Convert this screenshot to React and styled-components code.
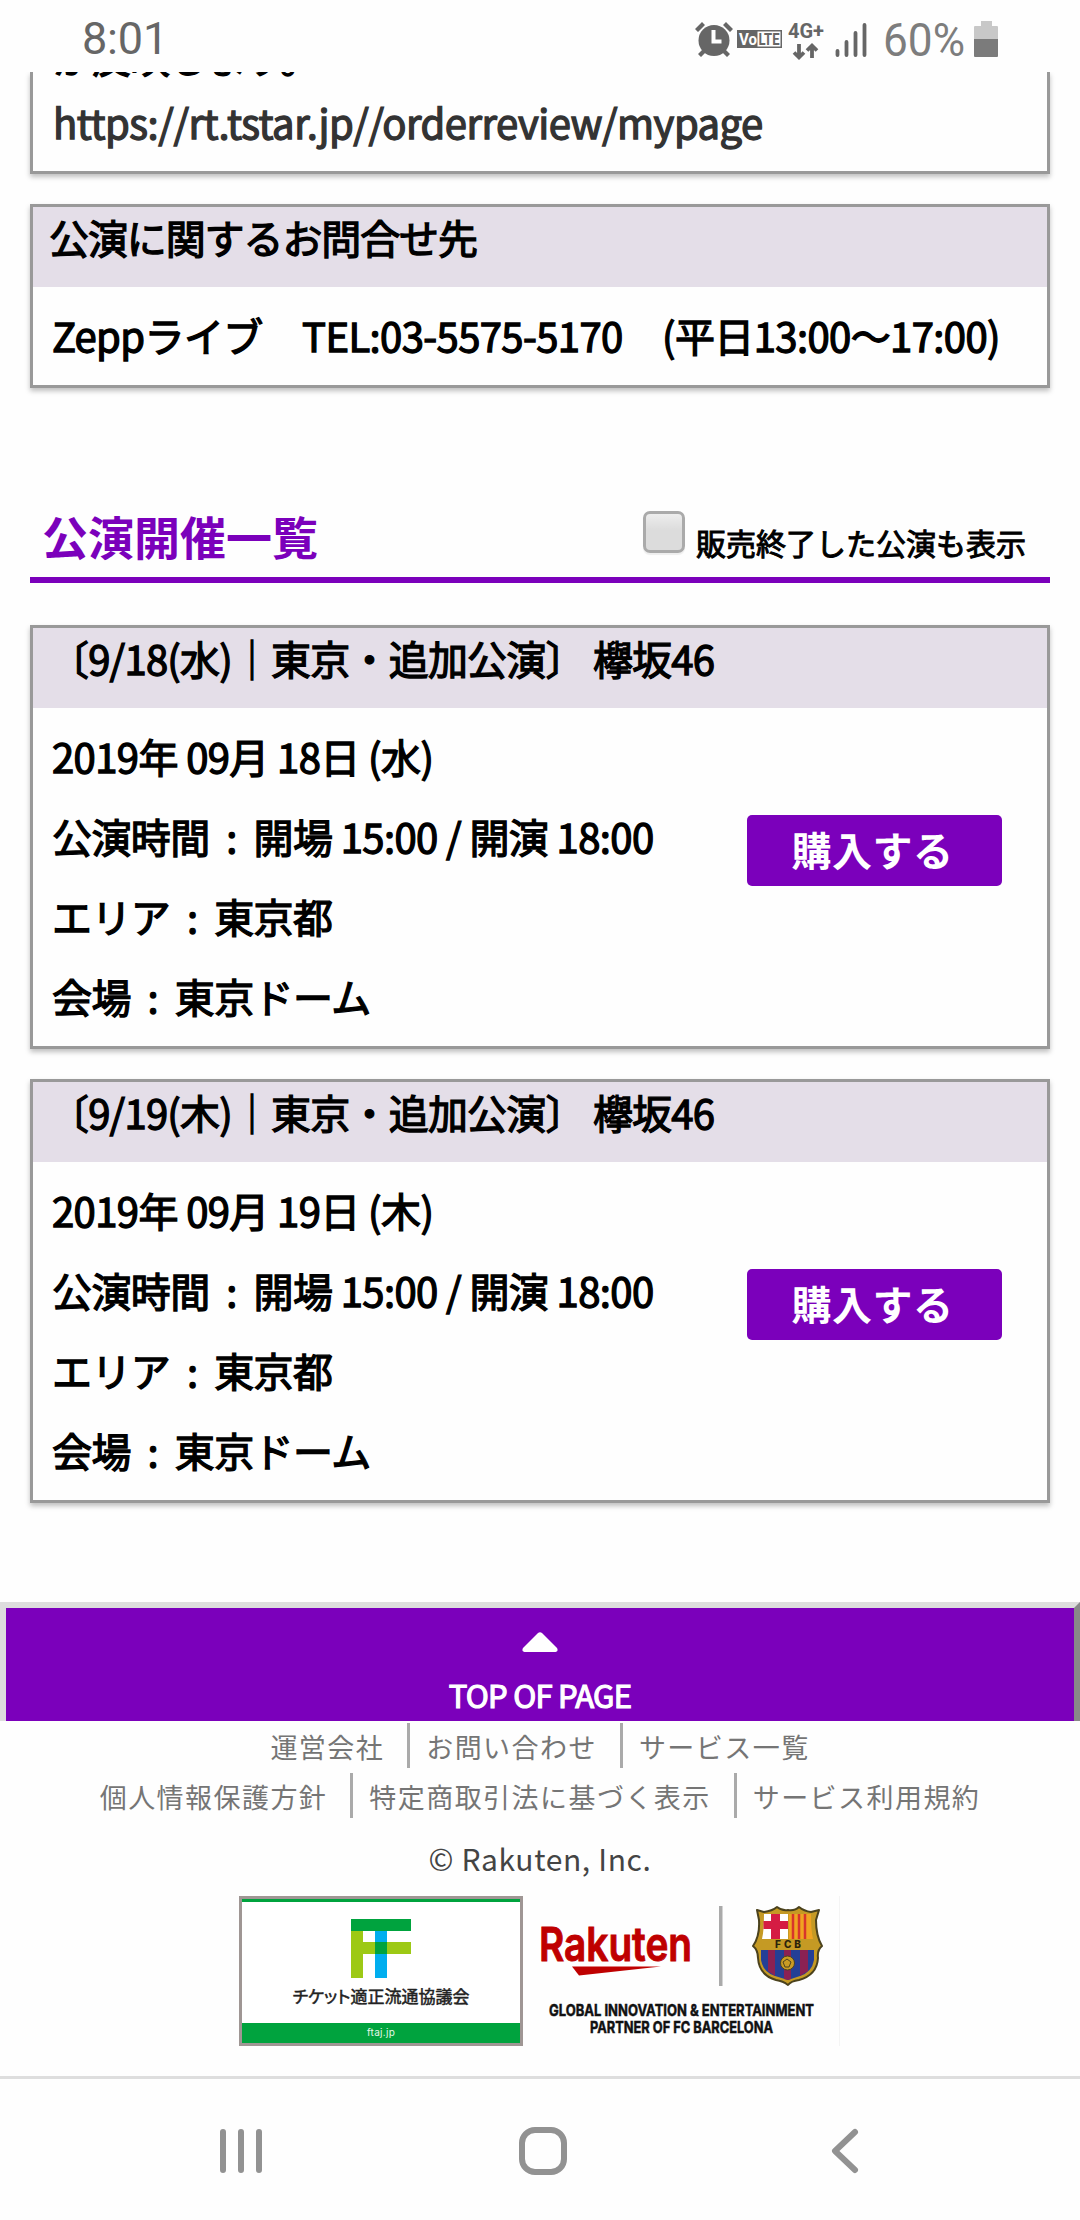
import React from "react";
import styled, { createGlobalStyle } from "styled-components";

const PURPLE = "#7b00bb";

const GlobalStyle = createGlobalStyle`
  body {
    margin: 0;
    background: #fefefe;
    color: #000;
    font-family: "Noto Sans CJK JP", sans-serif;
  }

  * {
    box-sizing: border-box;
  }
`;

const Screen = styled.div`
  display: flex;
  flex-direction: column;
  width: 1080px;
  height: 2220px;
  overflow: hidden;
`;

const StatusBar = styled.header`
  display: flex;
  justify-content: space-between;
  align-items: center;
  flex: none;
  height: 72px;
  padding: 4px 80px 0 82px;
  color: #666;
  font-family: Roboto, sans-serif;
  font-size: 45px;
`;

const Clock = styled.span`
  letter-spacing: -0.2px;
`;

const StatusIcons = styled.svg`
  display: block;
`;

/* the page is scrolled, so the first card is cut by the status bar */
const Page = styled.main`
  display: flex;
  flex-direction: column;
  flex: none;
  height: 1530px;
  padding: 0 30px;
  overflow: hidden;
`;

const Card = styled.section`
  flex: none;
  margin-bottom: 30px;
  border: 3px solid #999;
  background: #fefefe;
  box-shadow: 0 3px 5px rgba(0, 0, 0, 0.25);
`;

const CutCard = styled(Card)`
  display: flex;
  flex-direction: column;
  justify-content: flex-end;
  height: 102px;
  border-top: 0;
  overflow: hidden;
  padding: 0 18px 9px 20px;
`;

const CardHeader = styled.h3`
  height: 80px;
  margin: 0;
  padding-left: 16px;
  background: #e4dee8;
  font-size: 40px;
  font-weight: 400;
  line-height: 61px;
  letter-spacing: ${props => props.$spacing || "-1.1px"};
  white-space: pre;
  -webkit-text-stroke: 1.3px #000;
`;

const CardBody = styled.div`
  display: flex;
  justify-content: space-between;
  padding: 8px 45px 10px 19px;
`;

const Line = styled.p`
  flex: none;
  margin: 0;
  font-size: 40px;
  line-height: 80px;
  letter-spacing: -0.6px;
  white-space: pre;
  -webkit-text-stroke: 1.3px currentColor;
`;

const CutLine = styled(Line)`
  margin-bottom: -14px;
  letter-spacing: -1.5px;
`;

const ReviewLink = styled(Line)`
  color: #333;
  letter-spacing: -0.5px;
`;

const BuyButton = styled.button`
  width: 255px;
  height: 71px;
  margin-top: 99px;
  padding: 0 4px 4px 0;
  border: 0;
  border-radius: 5px;
  background: ${PURPLE};
  color: #fff;
  font: bold 40px/1 "Noto Sans CJK JP", sans-serif;
  letter-spacing: 0.5px;
`;

const ListHeading = styled.div`
  display: flex;
  align-items: flex-end;
  justify-content: space-between;
  flex: none;
  height: 105px;
  margin: 60px 0 42px;
  padding: 0 24px 0 12px;
  border-bottom: 6px solid ${PURPLE};
`;

const ListTitle = styled.h2`
  margin: 0;
  padding-bottom: 15px;
  color: ${PURPLE};
  font-size: 46px;
  line-height: 54px;
`;

const SoldOutToggle = styled.label`
  display: flex;
  align-items: flex-start;
  gap: 11px;
  height: 66px;
  font-size: 30px;
  line-height: 62px;
  -webkit-text-stroke: 1px #000;
`;

const Checkbox = styled.input`
  appearance: none;
  width: 42px;
  height: 42px;
  margin: 0;
  border: 3px solid #aaa;
  border-radius: 7px;
  background: linear-gradient(#ededed, #dcdcdc 45%);
  box-shadow: 0 2px 1px #eee;
`;

const TopButton = styled.a`
  display: flex;
  flex-direction: column;
  align-items: center;
  flex: none;
  height: 119px;
  border: 6px solid #ddd;
  border-right-color: #888;
  border-bottom: 0;
  background: ${PURPLE};
  color: #fff;
  font-size: 31px;
  line-height: 44px;
  letter-spacing: -0.7px;
  -webkit-text-stroke: 1.2px #fff;

  svg {
    margin: 24px 0 20px;
  }
`;

const LinkRow = styled.nav`
  display: flex;
  justify-content: center;
  flex: none;
  width: 1080px;
  height: 50px;
  padding: 2px 0 0 7px;
`;

const FooterLink = styled.a`
  height: 45px;
  padding: 0 23px 0 16px;
  border-right: 3px solid #aaa;
  color: #757575;
  font-size: 27px;
  line-height: 48px;
  letter-spacing: 1.45px;

  &:last-child {
    border-right: 0;
  }
`;

const Copyright = styled.p`
  flex: none;
  margin: 15px 0 2px;
  color: #444;
  font-size: 30px;
  line-height: 44px;
  letter-spacing: 0.65px;
  text-align: center;
`;

const Badges = styled.div`
  display: flex;
  gap: 5px;
  flex: none;
  height: 150px;
  margin: 14px 0 30px 239px;
`;

const TicketBadge = styled.div`
  display: flex;
  flex-direction: column;
  align-items: center;
  width: 284px;
  border: 3px solid #9f9694;
  background: #fff;

  &::before {
    content: "";
    width: 100%;
    height: 3px;
    background: #00a33e;
  }

  svg {
    margin-top: 17px;
  }
`;

const TicketName = styled.span`
  margin-top: 6px;
  color: #222;
  font-size: 17px;
  font-weight: 400;
  line-height: 24px;
  font-feature-settings: "palt";
  -webkit-text-stroke: 0.5px #222;
  white-space: nowrap;
`;

const TicketSite = styled.span`
  width: 100%;
  height: 20px;
  margin-top: auto;
  background: #00a33e;
  color: #e4f8e9;
  font: 10px/18px Inter, sans-serif;
  letter-spacing: 0.3px;
  text-align: center;
`;

const PartnerBadge = styled.div`
  display: flex;
  flex-direction: column;
  width: 312px;
  border-right: 1px solid #f4f4f4;
`;

const PartnerLogos = styled.svg`
  display: block;
  overflow: visible;
`;

const SystemNav = styled.footer`
  flex: 1;
  border-top: 3px solid #dedede;

  svg {
    display: block;
  }
`;

const shows = [
  { title: "〔9/18(水)｜東京・追加公演〕 欅坂46", date: "2019年 09月 18日 (水)" },
  { title: "〔9/19(木)｜東京・追加公演〕 欅坂46", date: "2019年 09月 19日 (木)" }
];

const links = [
  ["運営会社", "お問い合わせ", "サービス一覧"],
  ["個人情報保護方針", "特定商取引法に基づく表示", "サービス利用規約"]
];

const Indicators = () => (
  <StatusIcons width="306" height="60" viewBox="694 6 306 60">
    <g fill="#666">
      <circle cx="714" cy="38.500" r="15.500" />
      <path d="M703 47l-5 5 3 3 6-6zM725 47l5 5-3 3-6-6z" />
      <path d="M695 27l7-7 3 3-7 7zM733 27l-7-7-3 3 7 7z" />
    </g>
    <path d="M713.500 28v11.500h8" fill="none" stroke="#fff" strokeWidth="4" />
    <rect x="737" y="28" width="45" height="18" fill="#666" />
    <rect x="757.500" y="29.500" width="23" height="15" fill="#fff" />
    <text x="739" y="43" fill="#fff" fontSize="17" fontWeight="700" textLength="18" lengthAdjust="spacingAndGlyphs">Vo</text>
    <text x="758.500" y="43" fill="#666" fontSize="17" fontWeight="700" textLength="21" lengthAdjust="spacingAndGlyphs">LTE</text>
    <text x="788" y="36" fill="#666" fontSize="20" fontWeight="700" textLength="36" lengthAdjust="spacingAndGlyphs">4G+</text>
    <path d="M799 42v13M794 50.500l5 4.800 5-4.800M812 56V43M807 48.500l5-4.800 5 4.800" fill="none" stroke="#666" strokeWidth="3.800" />
    <path d="M837.500 49v4M846.500 40v13M855.500 31v22M864.500 23v30" stroke="#666" strokeWidth="3.800" strokeLinecap="round" />
    <text x="883" y="54" fill="#7d7d7d" fontSize="46" textLength="82" lengthAdjust="spacingAndGlyphs">60%</text>
    <path d="M981 19h11v5h5q1 0 1 1v13h-24V25q0-1 1-1h6z" fill="#c8c8c8" />
    <path d="M974 37h24v17q0 1-1 1h-22q-1 0-1-1z" fill="#7b7b7b" />
  </StatusIcons>
);

const FfLogo = () => (
  <svg width="60" height="59">
    <path d="M0 12h12v11h48v12H12v24H0z" fill="#9dc915" />
    <rect x="24" y="12" width="12" height="47" fill="#00aeef" />
    <path d="M0 0h60v12H0zM24 23h12v12H24z" fill="#00a33e" />
  </svg>
);

const Partner = () => (
  <PartnerLogos width="311" height="150" viewBox="528 1896 311 150">
    <text x="539" y="1961" fill="#bf0000" fontFamily="Inter" fontWeight="600" fontSize="47" stroke="#bf0000" strokeWidth="1" textLength="153" lengthAdjust="spacingAndGlyphs">Rakuten</text>
    <path d="M572 1966.500h89l-82 9z" fill="#bf0000" />
    <rect x="719" y="1906" width="3.500" height="80" fill="#aaa" />
    <path
      d="M757 1910l7 2q8-1 13-5 5 4 11 3 7 1 11-3 5 4 12 5l8-2-3 10q0 16 6 26-5 4-4 12-1 17-19 22-8 1-11 5-5-4-12-5-17-5-18-22 0-8-5-12 7-10 6-26z"
      fill="#c59a24"
      stroke="#4b421d"
      strokeWidth="2"
      strokeLinejoin="round"
    />
    <path d="M764 1914h24v25h-26q2-8 2-25z" fill="#fff" />
    <path d="M763.500 1921H788v8h-24.500zM771 1914h9v25h-9z" fill="#d51c43" />
    <path d="M789 1914h22q0 17 2 25h-24z" fill="#f0a321" />
    <path d="M793 1914v25M799 1914v25M805 1914v25" stroke="#d7352c" strokeWidth="2.500" />
    <path d="M761 1950h53v10q-2 12-14 16l-12 4-13-4q-12-4-14-16z" fill="#243f96" />
    <path d="M768 1950h7v26l-7-5zM784 1950h7v29l-3 1-4-1zM800 1950h8v21l-8 5z" fill="#8b2153" />
    <circle cx="787.500" cy="1963" r="7" fill="#c99c24" stroke="#4b421d" />
    <path d="M783 1962l4-3 4 3-2 5h-4z" fill="none" stroke="#4b421d" />
    <text x="775" y="1948" fontFamily="Inter" fontWeight="800" fontSize="10" textLength="26" fill="#2b230b">FCB</text>
    <g fill="#111" stroke="#111" strokeWidth="0.500" fontFamily="Inter" fontWeight="700" fontSize="16">
      <text x="549" y="2015.500" textLength="265" lengthAdjust="spacingAndGlyphs">GLOBAL INNOVATION &amp; ENTERTAINMENT</text>
      <text x="590" y="2032.500" textLength="183" lengthAdjust="spacingAndGlyphs">PARTNER OF FC BARCELONA</text>
    </g>
  </PartnerLogos>
);

const App = () => (
  <Screen>
    <GlobalStyle />
    <StatusBar>
      <Clock>8:01</Clock>
      <Indicators />
    </StatusBar>
    <Page>
      <CutCard>
        <CutLine>が反映します。</CutLine>
        <ReviewLink>https://rt.tstar.jp//orderreview/mypage</ReviewLink>
      </CutCard>
      <Card>
        <CardHeader>公演に関するお問合せ先</CardHeader>
        <CardBody>
          <Line>Zeppライブ　TEL:03-5575-5170　(平日13:00〜17:00)</Line>
        </CardBody>
      </Card>
      <ListHeading>
        <ListTitle>公演開催一覧</ListTitle>
        <SoldOutToggle>
          <Checkbox type="checkbox" />
          販売終了した公演も表示
        </SoldOutToggle>
      </ListHeading>
      {shows.map((show, index) => (
        <Card key={index}>
          <CardHeader $spacing="-0.8px">{show.title}</CardHeader>
          <CardBody>
            <div>
              <Line>{show.date}</Line>
              <Line>{"公演時間  :  開場 15:00 / 開演 18:00"}</Line>
              <Line>{"エリア  :  東京都"}</Line>
              <Line>{"会場  :  東京ドーム"}</Line>
            </div>
            <BuyButton>購入する</BuyButton>
          </CardBody>
        </Card>
      ))}
    </Page>
    <TopButton>
      <svg width="36" height="21">
        <path d="M16 1q2-1.500 4 0l15 15q2 4-3 4H4q-5 0-3-4z" fill="#fff" />
      </svg>
      TOP OF PAGE
    </TopButton>
    {links.map((row, index) => (
      <LinkRow key={index}>
        {row.map(text => (
          <FooterLink key={text}>{text}</FooterLink>
        ))}
      </LinkRow>
    ))}
    <Copyright>© Rakuten, Inc.</Copyright>
    <Badges>
      <TicketBadge>
        <FfLogo />
        <TicketName>チケット適正流通協議会</TicketName>
        <TicketSite>ftaj.jp</TicketSite>
      </TicketBadge>
      <PartnerBadge>
        <Partner />
      </PartnerBadge>
    </Badges>
    <SystemNav>
      <svg width="1080" height="141" viewBox="0 2079 1080 141" fill="none" stroke="#929292" strokeWidth="6" strokeLinecap="round" strokeLinejoin="round">
        <path d="M223 2132v38M241 2132v38M259 2132v38" />
        <rect x="522" y="2130" width="42" height="42" rx="13" />
        <path d="M855 2132l-20 19 20 19" />
      </svg>
    </SystemNav>
  </Screen>
);

export default App;
